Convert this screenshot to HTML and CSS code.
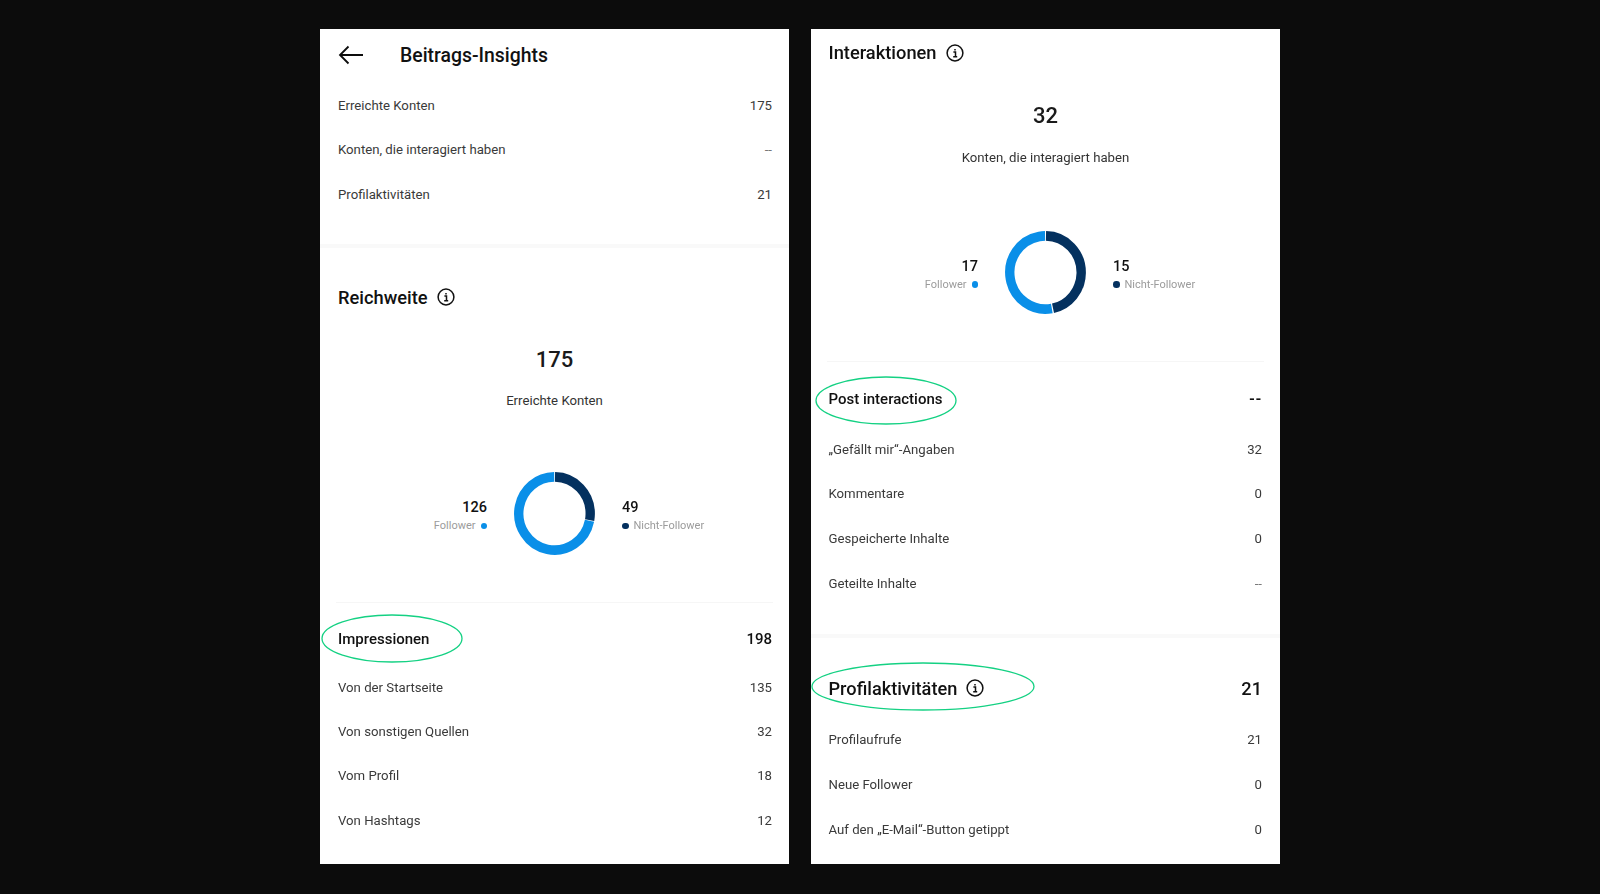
FILE: index.html
```html
<!DOCTYPE html>
<html lang="de">
<head>
<meta charset="utf-8">
<title>Beitrags-Insights</title>
<link rel="stylesheet" href="styles.css">
</head>
<body>
<main class="stage">
  <section class="panel">
    <header class="topbar">
      <svg class="back" width="26" height="20" viewBox="0 0 26 20" aria-hidden="true"><path d="M25 10H2M10.5 1.5 2 10l8.5 8.5" fill="none" stroke="#0d0d0d" stroke-width="1.8"/></svg>
      <h1 class="page-title">Beitrags-Insights</h1>
    </header>
    <div class="rows rows-summary">
      <div class="row"><span>Erreichte Konten</span><span>175</span></div>
      <div class="row"><span>Konten, die interagiert haben</span><span class="dash">--</span></div>
      <div class="row"><span>Profilaktivitäten</span><span>21</span></div>
    </div>
    <div class="band"></div>
    <h2 class="section-title title-reach">Reichweite
      <svg class="info" viewBox="0 0 18 18" aria-hidden="true"><circle cx="9" cy="9" r="7.9"/><path d="M7.4 8h2.1v4.6M7.2 12.8h4M9 4.9v1.7"/></svg>
    </h2>
    <div class="metric metric-reach">175</div>
    <div class="metric-label">Erreichte Konten</div>
    <div class="chart chart-reach">
      <div class="legend legend-left">
        <strong>126</strong>
        <span class="key">Follower<i class="dot dot-light"></i></span>
      </div>
      <svg class="donut" viewBox="0 0 83 83" preserveAspectRatio="none" aria-hidden="true">
        <circle class="ring ring-light" cx="41.5" cy="41.5" r="36.6" pathLength="360" stroke-dasharray="258 102" transform="rotate(11.5 41.5 41.5)"/>
        <circle class="ring ring-dark" cx="41.5" cy="41.5" r="36.6" pathLength="360" stroke-dasharray="99.5 260.5" transform="rotate(-89.2 41.5 41.5)"/>
      </svg>
      <div class="legend">
        <strong>49</strong>
        <span class="key"><i class="dot dot-dark"></i>Nicht-Follower</span>
      </div>
    </div>
    <hr class="rule rule-reach">
    <div class="row row-head">
      <span class="marked"><svg class="oval oval-impr" viewBox="0 0 142 49" aria-hidden="true"><ellipse cx="71" cy="24.5" rx="70" ry="23.5"/></svg>Impressionen</span><span>198</span>
    </div>
    <div class="rows rows-impr">
      <div class="row"><span>Von der Startseite</span><span>135</span></div>
      <div class="row"><span>Von sonstigen Quellen</span><span>32</span></div>
      <div class="row"><span>Vom Profil</span><span>18</span></div>
      <div class="row"><span>Von Hashtags</span><span>12</span></div>
    </div>
  </section>

  <section class="panel panel-right">
    <h2 class="section-title title-inter">Interaktionen
      <svg class="info" viewBox="0 0 18 18" aria-hidden="true"><circle cx="9" cy="9" r="7.9"/><path d="M7.4 8h2.1v4.6M7.2 12.8h4M9 4.9v1.7"/></svg>
    </h2>
    <div class="metric metric-inter">32</div>
    <div class="metric-label">Konten, die interagiert haben</div>
    <div class="chart chart-inter">
      <div class="legend legend-left">
        <strong>17</strong>
        <span class="key">Follower<i class="dot dot-light"></i></span>
      </div>
      <svg class="donut" viewBox="0 0 83 83" preserveAspectRatio="none" aria-hidden="true">
        <circle class="ring ring-light" cx="41.5" cy="41.5" r="36.6" pathLength="360" stroke-dasharray="189.5 170.5" transform="rotate(79.8 41.5 41.5)"/>
        <circle class="ring ring-dark" cx="41.5" cy="41.5" r="36.6" pathLength="360" stroke-dasharray="167 193" transform="rotate(-89.2 41.5 41.5)"/>
      </svg>
      <div class="legend">
        <strong>15</strong>
        <span class="key"><i class="dot dot-dark"></i>Nicht-Follower</span>
      </div>
    </div>
    <hr class="rule rule-inter">
    <div class="row row-head">
      <span class="marked"><svg class="oval oval-post" viewBox="0 0 142 49" aria-hidden="true"><ellipse cx="71" cy="24.5" rx="70" ry="23.5"/></svg>Post interactions</span><span class="dash-strong">--</span>
    </div>
    <div class="rows rows-wide rows-post">
      <div class="row"><span>„Gefällt mir“-Angaben</span><span>32</span></div>
      <div class="row"><span>Kommentare</span><span>0</span></div>
      <div class="row"><span>Gespeicherte Inhalte</span><span>0</span></div>
      <div class="row"><span>Geteilte Inhalte</span><span class="dash">--</span></div>
    </div>
    <div class="band band-inter"></div>
    <div class="row row-head row-profile">
      <span class="marked"><svg class="oval oval-prof" viewBox="0 0 224 49" aria-hidden="true"><ellipse cx="112" cy="24.5" rx="111" ry="23.5"/></svg>Profilaktivitäten<svg class="info" viewBox="0 0 18 18" aria-hidden="true"><circle cx="9" cy="9" r="7.9"/><path d="M7.4 8h2.1v4.6M7.2 12.8h4M9 4.9v1.7"/></svg></span><span>21</span>
    </div>
    <div class="rows rows-wide rows-prof">
      <div class="row"><span>Profilaufrufe</span><span>21</span></div>
      <div class="row"><span>Neue Follower</span><span>0</span></div>
      <div class="row"><span>Auf den „E-Mail“-Button getippt</span><span>0</span></div>
    </div>
  </section>
</main>
</body>
</html>
```

FILE: styles.css
```css
* { box-sizing: border-box; }

html, body { margin: 0; height: 100%; }

body {
  background: #0c0c0c;
  color: #222;
  font-family: Roboto, "Liberation Sans", sans-serif;
  overflow: hidden;
}

.stage {
  display: flex;
  justify-content: center;
  gap: 22px;
  padding-top: 29px;
  filter: blur(0.35px);
}

.panel {
  width: 469px;
  height: 835px;
  background: #fff;
  display: flex;
  flex-direction: column;
}

.topbar {
  height: 52px;
  display: flex;
  align-items: center;
  padding-left: 18px;
  gap: 36px;
  margin-bottom: 2.6px;
  flex: none;
}

.back { flex: none; }

.page-title {
  margin: 0;
  font-size: 19.4px;
  font-weight: 500;
  color: #111;
}

.rows { display: flex; flex-direction: column; flex: none; }

.row {
  display: flex;
  justify-content: space-between;
  align-items: center;
  height: 44.2px;
  flex: none;
  padding: 0 17px 0 18px;
  font-size: 13.2px;
  color: #3a3a3a;
}

.panel-right .row { padding: 0 18px 0 17.5px; }

.rows-wide .row { height: 44.8px; }

.dash { color: #777; }

.dash-strong { font-weight: 700; letter-spacing: 0.04em; }

.rows-summary { margin-bottom: 28px; }

.band { height: 4px; background: #f9f9f9; flex: none; }

.section-title {
  margin: 0;
  height: 28px;
  display: flex;
  align-items: center;
  gap: 9px;
  padding-left: 18px;
  font-size: 18.3px;
  font-weight: 500;
  color: #111;
  flex: none;
}

.panel-right .section-title { padding-left: 17.5px; }

.title-reach { margin-top: 35px; }
.title-inter { margin-top: 9.7px; }

.info {
  width: 18px;
  height: 18px;
  flex: none;
  fill: none;
  stroke: #111;
  stroke-width: 1.5;
}

.metric {
  height: 30px;
  line-height: 30px;
  text-align: center;
  font-size: 22px;
  font-weight: 500;
  color: #1a1a1a;
  flex: none;
}

.metric-reach { margin-top: 34px; }
.metric-inter { margin-top: 34px; }

.metric-label {
  height: 20px;
  line-height: 20px;
  margin-top: 15.5px;
  text-align: center;
  font-size: 13.2px;
  color: #333;
  flex: none;
}

.panel-right .metric-label { margin-top: 17px; }

.chart {
  display: grid;
  grid-template-columns: 1fr 81px 1fr;
  column-gap: 27px;
  align-items: center;
  height: 83px;
  flex: none;
}

.chart-reach { margin-top: 61.5px; }
.chart-inter { margin-top: 63px; }

.legend {
  display: flex;
  flex-direction: column;
  gap: 1px;
  padding-top: 6px;
  align-items: flex-start;
}

.legend-left { align-items: flex-end; }

.legend strong {
  font-size: 14.5px;
  line-height: 18px;
  font-weight: 500;
  color: #111;
}

.key {
  display: flex;
  align-items: center;
  gap: 5px;
  font-size: 11px;
  line-height: 16px;
  color: #9b9b9b;
}

.dot {
  width: 6.5px;
  height: 6.5px;
  border-radius: 50%;
  flex: none;
}

.dot-light { background: #0a8fe8; }
.dot-dark { background: #04315f; }

.donut { width: 81px; height: 83px; display: block; }

.ring { fill: none; stroke-width: 9.6; }
.ring-light { stroke: #0a8fe8; }
.ring-dark { stroke: #04315f; }

.rule {
  margin: 0 16px;
  border: 0;
  height: 1px;
  background: #f6f6f6;
  flex: none;
}

.rule-reach { margin-top: 46.5px; margin-bottom: 14.5px; }
.rule-inter { margin-top: 47px; margin-bottom: 15.6px; }

.row-head {
  height: 44px;
  font-size: 15px;
  font-weight: 500;
  color: #111;
}

.rows-impr { margin-top: 4.3px; }
.rows-post { margin-top: 5.5px; }

.band-inter { margin-top: 27.6px; }

.row-profile {
  margin-top: 28.5px;
  font-size: 18.2px;
}

.row-profile .info { margin-left: 9px; }

.rows-prof { margin-top: 7.3px; }

.marked {
  position: relative;
  display: inline-flex;
  align-items: center;
}

.oval {
  position: absolute;
  fill: none;
  stroke: #14d183;
  stroke-width: 1.3;
  pointer-events: none;
}

.oval-impr { left: -17.5px; top: -16.5px; width: 142px; height: 49px; }
.oval-post { left: -13.5px; top: -14px; width: 142px; height: 49px; }
.oval-prof { left: -17.5px; top: -15.5px; width: 224px; height: 49px; }
```
